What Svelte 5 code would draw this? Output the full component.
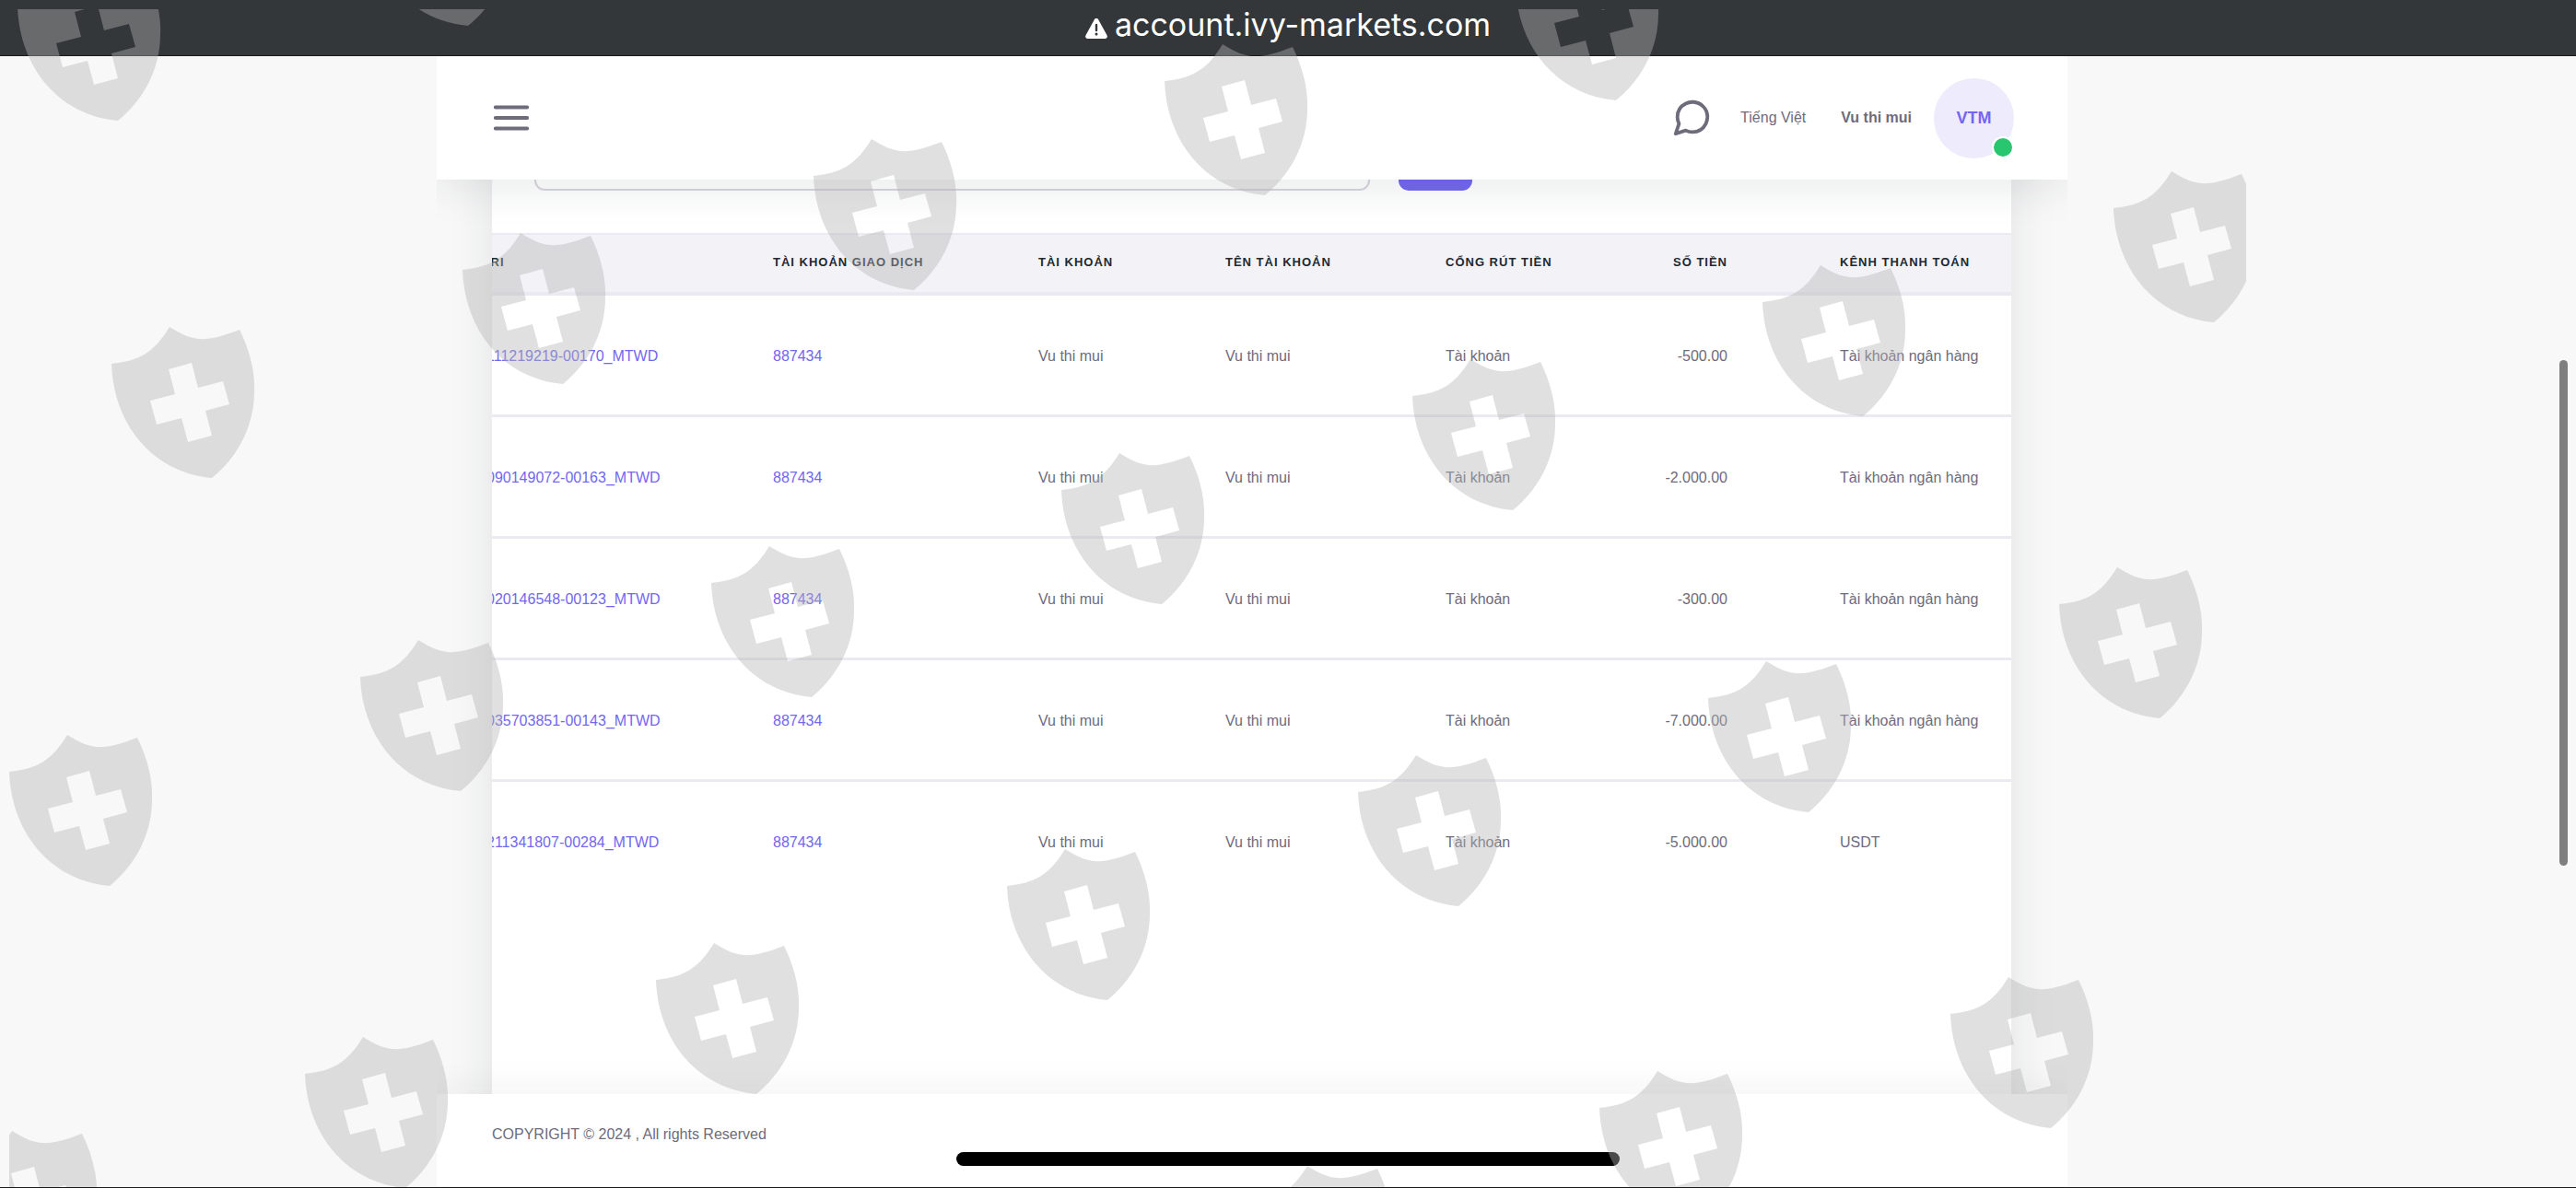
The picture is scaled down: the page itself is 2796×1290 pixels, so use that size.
<script>
    const columns = [
        { key: "id", label: "\u00a0RI", width: 311 },
        { key: "login", label: "Tài khoản giao dịch", width: 288 },
        { key: "account", label: "Tài khoản", width: 203 },
        { key: "name", label: "Tên tài khoản", width: 239 },
        { key: "gateway", label: "Cổng rút tiền", width: 246 },
        { key: "amount", label: "Số tiền", width: 182 },
        { key: "channel", label: "Kênh thanh toán", width: 247 },
    ];

    const base = {
        login: "887434",
        account: "Vu thi mui",
        name: "Vu thi mui",
        gateway: "Tài khoản",
        channel: "Tài khoản ngân hàng",
    };

    const rows = [
        { ...base, id: "111219219-00170_MTWD", amount: "-500.00" },
        { ...base, id: "090149072-00163_MTWD", amount: "-2.000.00" },
        { ...base, id: "020146548-00123_MTWD", amount: "-300.00" },
        { ...base, id: "035703851-00143_MTWD", amount: "-7.000.00" },
        {
            ...base,
            id: "211341807-00284_MTWD",
            amount: "-5.000.00",
            channel: "USDT",
        },
    ];

    // top-left corner of every shield on the overlay
    const shields = [
        [19, -33],
        [399, -136],
        [1645, -55],
        [1264, 48],
        [883, 151],
        [502, 253],
        [121, 355],
        [2294, 186],
        [1913, 288],
        [1533, 390],
        [1152, 492],
        [772, 593],
        [391, 695],
        [10, 798],
        [2235, 616],
        [1854, 718],
        [1474, 820],
        [1093, 922],
        [712, 1024],
        [331, 1126],
        [-50, 1228],
        [2117, 1061],
        [1736, 1163],
        [1356, 1266],
    ];
</script>

<div class="page">
    <div class="address-bar">
        <svg class="warning" viewBox="0 0 24 22" aria-hidden="true">
            <path
                d="M12 0c1 0 1.800.5 2.300 1.400l9.200 16.800c1 1.800-.1 3.800-2.200 3.800H2.700C.6 22-.5 20 .5 18.200L9.700 1.400C10.200.5 11 0 12 0z"
                fill="#fff"
            />
            <path d="M12 7v6" stroke="#33373a" stroke-width="2.400" stroke-linecap="round" />
            <circle cx="12" cy="17" r="1.500" fill="#33373a" />
        </svg>
        <span>account.ivy-markets.com</span>
    </div>

    <div class="column">
        <header class="navbar">
            <button class="icon-button" aria-label="Menu">
                <svg viewBox="0 0 24 24">
                    <path d="M3 12h18M3 6h18M3 18h18" />
                </svg>
            </button>
            <nav class="nav-right">
                <button class="icon-button" aria-label="Chat">
                    <svg viewBox="0 0 24 24">
                        <path
                            d="M21 11.500a8.380 8.380 0 0 1-.9 3.800 8.500 8.500 0 0 1-7.600 4.700 8.380 8.380 0 0 1-3.800-.9L3 21l1.900-5.700a8.380 8.380 0 0 1-.9-3.800 8.500 8.500 0 0 1 4.700-7.600 8.380 8.380 0 0 1 3.800-.9h.5a8.480 8.480 0 0 1 8 8v.5z"
                        />
                    </svg>
                </button>
                <a class="language" href="#language">Tiếng Việt</a>
                <a class="user" href="#profile">
                    <span class="user-name">Vu thi mui</span>
                    <span class="avatar">VTM<span class="status"></span></span>
                </a>
            </nav>
        </header>

        <main class="content">
            <section class="card">
                <form class="filter">
                    <input type="text" aria-label="Filter" />
                    <button type="button" aria-label="Search"></button>
                </form>
                <div class="table-scroll">
                    <table>
                        <colgroup>
                            {#each columns as column}
                                <col style="width: {column.width}px" />
                            {/each}
                        </colgroup>
                        <thead>
                            <tr>
                                {#each columns as column}
                                    <th class={column.key}>{column.label}</th>
                                {/each}
                            </tr>
                        </thead>
                        <tbody>
                            {#each rows as row}
                                <tr>
                                    {#each columns as column}
                                        <td class={column.key}>
                                            {#if column.key === "id" || column.key === "login"}
                                                <a href="#{row[column.key]}">{row[column.key]}</a>
                                            {:else}
                                                {row[column.key]}
                                            {/if}
                                        </td>
                                    {/each}
                                </tr>
                            {/each}
                        </tbody>
                    </table>
                </div>
            </section>
        </main>

        <footer class="footer">COPYRIGHT © 2024 , All rights Reserved</footer>
    </div>

    <div class="scrollbar"></div>
    <div class="home-indicator"></div>

    <svg class="watermark" aria-hidden="true">
        <defs>
            <clipPath id="watermark-area">
                <rect x="10" y="10" width="2428" height="1280" />
            </clipPath>
            <path
                id="shield"
                fill-rule="evenodd"
                d="M0 40C30 37 46 28 63 0C90 17 102 17 139 3C150 25 156 49 155 70C155 110 135 143 109 164C43 158 2 104 0 40ZM62 46L87 39L94 66L121 59L128 84L102 91L109 118L83 125L76 99L49 106L42 80L69 73Z"
            />
        </defs>
        <g clip-path="url(#watermark-area)">
            {#each shields as [x, y]}
                <use href="#shield" {x} {y} />
            {/each}
        </g>
    </svg>
</div>

<style>
    :global(body) {
        background: #f8f8f8;
    }

    .page {
        position: relative;
        overflow: hidden;
        border-bottom: 1px solid #1a1a1a;
        background: #f8f8f8;
        color: #6e6b7b;
        font-family: "Liberation Sans", Arial, sans-serif;
        font-size: 16px;
    }

    .address-bar {
        display: flex;
        align-items: flex-start;
        justify-content: center;
        gap: 8px;
        height: 60px;
        border-bottom: 1px solid #1a1a1a;
        background: #33373a;
        color: #fff;
        font-family: Inter, sans-serif;
        font-size: 34px;
        line-height: 54px;
    }

    .warning {
        width: 24px;
        height: 22px;
        margin-top: 20px;
    }

    .column {
        width: calc(100% * 1770 / 2796);
        margin-left: calc(100% * 474 / 2796);
        overflow: hidden;
    }

    .navbar {
        position: relative;
        z-index: 1;
        display: flex;
        align-items: center;
        justify-content: space-between;
        box-sizing: border-box;
        height: 134px;
        padding: 0 58px;
        background: #fff;
        box-shadow: 0 8px 46px rgba(34, 41, 47, 0.1);
    }

    .nav-right,
    .user {
        display: flex;
        align-items: center;
    }

    .icon-button {
        display: flex;
        padding: 0;
        border: 0;
        background: none;
    }

    .icon-button svg {
        width: 46px;
        height: 46px;
        fill: none;
        stroke: #6e6b7b;
        stroke-width: 2;
        stroke-linecap: round;
        stroke-linejoin: round;
    }

    .language {
        margin: 0 38px 0 30px;
        color: #6e6b7b;
        text-decoration: none;
    }

    .user {
        gap: 24px;
        color: #6e6b7b;
        text-decoration: none;
    }

    .user-name {
        font-weight: bold;
    }

    .avatar {
        position: relative;
        width: 87px;
        border-radius: 50%;
        background: #eeebfd;
        color: #7367f0;
        font-size: 18px;
        font-weight: bold;
        line-height: 87px;
        text-align: center;
    }

    .status {
        position: absolute;
        right: 0;
        bottom: 0;
        width: 20px;
        height: 20px;
        border: 2px solid #fff;
        border-radius: 50%;
        background: #28c76f;
    }

    .content {
        padding: 0 61px 0 60px;
    }

    /* the card runs on underneath the navbar and the footer */
    .card {
        margin: -100px 0;
        padding-bottom: 310px;
        background: #fff;
        box-shadow: 0 8px 46px rgba(34, 41, 47, 0.1);
    }

    .filter {
        display: flex;
        gap: 31px;
        box-sizing: border-box;
        height: 158px;
        padding: 42px 46px 46px;
    }

    .filter input {
        box-sizing: border-box;
        flex: 0 1 907px;
        min-width: 0;
        border: 2px solid #d8d6de;
        border-radius: 11px;
        background: #fff;
    }

    .filter button {
        width: 80px;
        border: 0;
        border-radius: 11px;
        background: #7367f0;
    }

    .table-scroll {
        display: flex;
        justify-content: flex-end;
        overflow: hidden;
    }

    table {
        flex: none;
        width: 1716px;
        table-layout: fixed;
        border-collapse: separate;
        border-spacing: 0;
        text-align: left;
        white-space: nowrap;
    }

    th {
        height: 58px;
        padding: 0 0 4px 61px;
        border-top: 2px solid #ebe9f1;
        border-bottom: 4px solid #ebe9f1;
        background: #f3f2f7;
        color: #22292f;
        font-size: 13px;
        letter-spacing: 1px;
        text-transform: uppercase;
    }

    td {
        height: 127px;
        padding: 2px 0 0 61px;
        border-bottom: 3px solid #ebe9f1;
    }

    tr:last-child td {
        border-bottom: 0;
    }

    td a {
        color: #7367f0;
        text-decoration: none;
    }

    .amount {
        padding-right: 61px;
        padding-left: 0;
        text-align: right;
    }

    .footer {
        position: relative;
        z-index: 1;
        padding: 0 60px 13px;
        background: #fff;
        box-shadow: 0 -8px 38px rgba(34, 41, 47, 0.05);
        line-height: 88px;
    }

    .scrollbar {
        position: absolute;
        top: 391px;
        right: 9px;
        z-index: 2;
        width: 9px;
        height: 549px;
        border-radius: 5px;
        background: #7f7f7f;
    }

    .home-indicator {
        position: absolute;
        bottom: 23px;
        left: 50%;
        z-index: 2;
        width: 720px;
        height: 15px;
        border-radius: 8px;
        background: #000;
        transform: translateX(-50%);
    }

    .watermark {
        position: absolute;
        inset: 0;
        z-index: 3;
        width: 100%;
        height: calc(100% + 1px);
        fill: rgba(180, 180, 180, 0.41);
        pointer-events: none;
    }
</style>
